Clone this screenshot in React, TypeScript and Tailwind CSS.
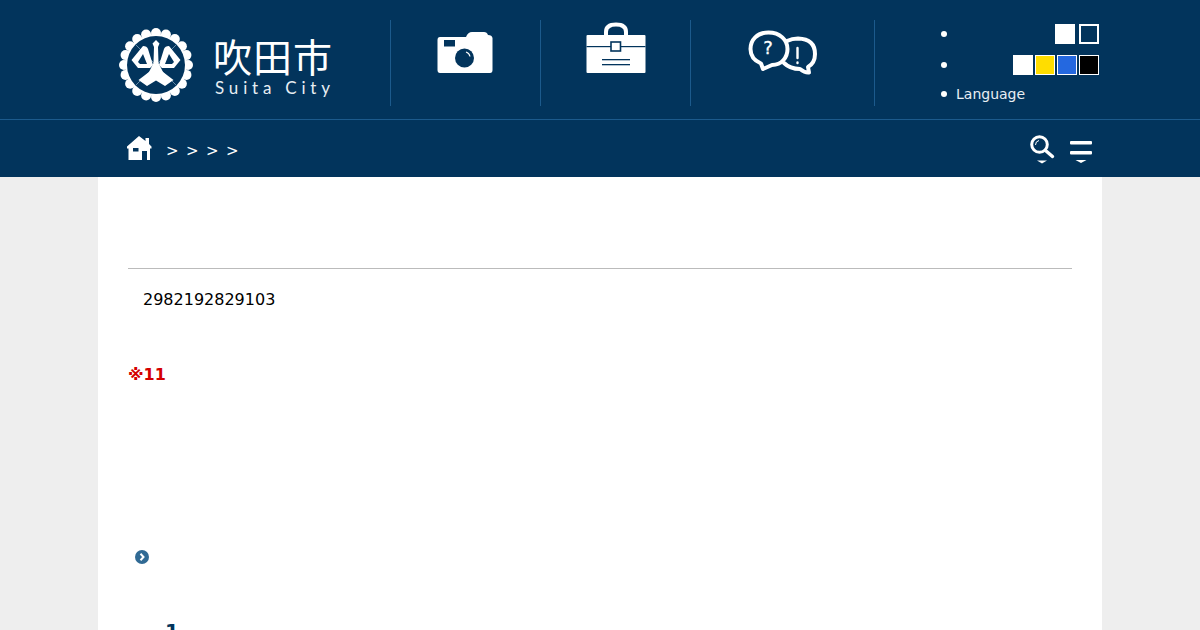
const FONT = "font-['DejaVu_Sans','Noto_Sans_CJK_JP',sans-serif]"

// 市章: scalloped ring + stylised bird
function Seal() {
  const scallops = Array.from({ length: 20 }).map((_, i) => {
    const a = (i / 20) * Math.PI * 2
    return { x: 38 + Math.cos(a) * 32, y: 38 + Math.sin(a) * 32 }
  })
  return (
    <svg width="76" height="76" viewBox="0 0 76 76">
      <circle cx="38" cy="38" r="31" fill="#fff" />
      {scallops.map((s, i) => <circle key={i} cx={s.x} cy={s.y} r="5" fill="#fff" />)}
      <circle cx="38" cy="38" r="29" fill="#02345c" />
      <path d="M17.500 17.500 L58.500 58.500 M58.500 17.500 L17.500 58.500" stroke="#8fb0c8" strokeWidth="0.700" />
      {/* 胴と尾 */}
      <path fill="#fff" d="M38 13 L41.500 16.500 L40 20 L40.500 36 L45 45 L55.500 53 L47 59 L38 53.500 L29 59 L20.500 53 L31 45 L35.500 36 L36 20 L34.500 16.500 Z" />
      {/* 左右の翼 */}
      <path fill="#fff" fillRule="evenodd" d="M25 19 Q29 19 30 22 L35 38 L32 41 L20 41 L13.500 33 Z M25 27 L20 35 L22 37 L29 37 Z" />
      <path fill="#fff" fillRule="evenodd" d="M51 19 Q47 19 46 22 L41 38 L44 41 L56 41 L62.500 33 Z M51 27 L56 35 L54 37 L47 37 Z" />
    </svg>
  )
}

function CameraIcon() {
  return (
    <svg width="56" height="43" viewBox="0 0 56 43">
      <path fill="#fff" d="M3 6 H29 Q31 1 35 1 H47 Q50 1 51 4 Q55 4 55.500 7 V39 Q55.500 42 53 42 H3 Q0.500 42 0.500 39 V9 Q0.500 6 3 6 Z" />
      <rect x="7" y="9" width="11" height="6.500" fill="#02345c" />
      <circle cx="27.500" cy="27" r="9.500" fill="#02345c" />
      <path d="M29 21 A6 6 0 0 1 33 25.500" fill="none" stroke="#fff" strokeWidth="1.200" />
    </svg>
  )
}

function BagIcon() {
  return (
    <svg width="60" height="52" viewBox="0 0 60 52">
      <path d="M20 13 V10 Q20 2.500 30 2.500 Q40 2.500 40 10 V13" fill="none" stroke="#fff" strokeWidth="4" />
      <rect x="0.500" y="13" width="59" height="38" rx="1" fill="#fff" />
      <rect x="0.500" y="24" width="59" height="1.200" fill="#02345c" />
      <rect x="25" y="20" width="9.500" height="9" fill="#fff" stroke="#02345c" strokeWidth="1.600" />
      <rect x="16" y="37" width="28" height="1.300" fill="#02345c" />
      <rect x="16" y="42" width="28" height="1.300" fill="#02345c" />
    </svg>
  )
}

function TalkIcon() {
  return (
    <svg width="70" height="46" viewBox="0 0 70 46" fill="none" stroke="#fff" strokeWidth="4" strokeLinecap="round" strokeLinejoin="round">
      <path d="M39 11 Q44 8.500 50 8.500 Q67 9 67 24 Q67 33 60 37 L61 42.500 Q57 43 52 39 Q42 39 36 33" />
      <path d="M20.500 2.500 C9 2.500 2.500 10 2.500 19 C2.500 26 7 31 13 33.500 L15 39 L24 35 C34 35 39.500 27 39.500 19 C39.500 10 32 2.500 20.500 2.500 Z" fill="#02345c" />
      <text x="20" y="24" fontFamily="DejaVu Sans" fontSize="18" fill="#fff" stroke="#fff" strokeWidth="0.300" textAnchor="middle">?</text>
      <path d="M49.500 18 V28 M49.500 32.500 V33" strokeWidth="2.400" />
    </svg>
  )
}

function HomeIcon() {
  return (
    <svg width="25" height="24" viewBox="0 0 25 24">
      <path fill="#fff" d="M12 0 L18.500 5 V2 H22 V8 L24.500 10.500 V12.500 H23 V24 H1.500 V12.500 H0 V10.500 Z" />
      <rect x="6" y="12" width="5.500" height="3.500" fill="#02345c" />
      <rect x="15" y="15" width="5" height="9" fill="#02345c" />
    </svg>
  )
}

function SearchIcon() {
  return (
    <svg width="25" height="29" viewBox="0 0 25 29" fill="none">
      <circle cx="9.500" cy="9.500" r="7.800" stroke="#fff" strokeWidth="3" />
      <path d="M15.500 15.500 L22.500 21.500" stroke="#fff" strokeWidth="3.400" strokeLinecap="round" />
      <path d="M5.500 10 A4.500 4.500 0 0 1 9 5.500" stroke="#fff" strokeWidth="1" />
      <path d="M7 25.500 H17 L12 28.500 Z" fill="#fff" />
    </svg>
  )
}

function MenuIcon() {
  return (
    <svg width="22" height="23" viewBox="0 0 22 23" fill="#fff">
      <rect x="0" y="0" width="22" height="3.500" rx="1" />
      <rect x="0" y="10" width="22" height="3.500" rx="1" />
      <path d="M5.500 19 H16.500 L11 22 Z" />
    </svg>
  )
}

function Swatch({ className }: { className: string }) {
  return <span className={`block h-5 w-5 border border-white ${className}`} />
}

function Dot() {
  return <span className="block h-[6px] w-[6px] shrink-0 rounded-full bg-white" />
}

export default function App() {
  return (
    <div className={`h-[630px] overflow-hidden bg-[#eeeeee] ${FONT}`}>
      {/* ヘッダー */}
      <header className="h-[120px] border-b border-[#1c5a8c] bg-[#02345c]">
        <div className="mx-auto flex h-[119px] w-[1004px] items-start pt-5">
          <div className="-mt-5 flex h-[119px] w-[292px] items-start pl-[20px] pt-[27px]">
            <Seal />
            <div className="ml-[19px] text-white">
              <p className="mt-[5px] font-['Noto_Sans_CJK_JP',sans-serif] text-[39px] leading-[46px] font-normal tracking-[1px] text-white">吹田市</p>
              <p className="ml-[2px] font-['Lato',sans-serif] text-[17px] leading-[20px] tracking-[4.800px] whitespace-nowrap text-[#e8eef3]">Suita City</p>
            </div>
          </div>
          <a className="flex h-[86px] w-[150px] justify-center border-l border-[#1c5a8c] pr-[2px] pt-[11px]"><CameraIcon /></a>
          <a className="flex h-[86px] w-[150px] justify-center border-l border-[#1c5a8c] pt-[2px]"><BagIcon /></a>
          <a className="flex h-[86px] w-[184px] justify-center border-l border-[#1c5a8c] pt-[10px]"><TalkIcon /></a>
          <ul className="flex h-[86px] w-[228px] flex-col border-l border-[#1c5a8c] pl-[66px] pr-[3px] text-[14px] text-[#e8eef3]">
            <li className="flex h-[31px] items-start pt-[4px]">
              <span className="mt-[7px] block"><Dot /></span>
              <div className="ml-auto flex gap-1"><Swatch className="bg-white" /><Swatch className="border-2 bg-[#02345c]" /></div>
            </li>
            <li className="flex h-[29px] items-start pt-[4px]">
              <span className="mt-[7px] block"><Dot /></span>
              <div className="ml-auto flex gap-[2px]">
                <Swatch className="bg-white" />
                <Swatch className="bg-[#ffdd00]" />
                <Swatch className="bg-[#2468e0]" />
                <Swatch className="bg-black" />
              </div>
            </li>
            <li className="flex h-[20px] items-center gap-[9px] pt-[8px] leading-[20px]">
              <Dot />
              <span>Language</span>
            </li>
          </ul>
        </div>
      </header>

      {/* パンくず */}
      <nav className="h-[57px] bg-[#02345c]">
        <div className="mx-auto flex h-full w-[1004px] items-start pl-[29px] pr-[10px] pt-[16px]">
          <HomeIcon />
          <div className="ml-[14px] mt-[6px] flex gap-[7.430px] text-[15px] leading-[19px] text-white">
            <span>&gt;</span><span>&gt;</span><span>&gt;</span><span>&gt;</span>
          </div>
          <div className="ml-auto flex items-start gap-[15px]">
            <div className="-mt-[1px]"><SearchIcon /></div>
            <div className="pt-[5px]"><MenuIcon /></div>
          </div>
        </div>
      </nav>

      {/* 本文 */}
      <main className="mx-auto h-[453px] w-[1004px] overflow-hidden bg-white px-[30px] pt-[91px]">
        <hr className="border-t border-[#bbbbbb]" />
        <p className="mt-[21px] pl-[15px] text-[16px] leading-[19px] text-black">2982192829103</p>
        <p className="mt-[56px] text-[16px] leading-[19px] font-bold text-[#d40000]">※11</p>
        <div className="mt-[166px] pl-[7px]">
          <svg width="14" height="14" viewBox="0 0 14 14">
            <circle cx="7" cy="7" r="7" fill="#306a94" />
            <path d="M5.500 3.800 L8.500 7 L5.500 10.200" fill="none" stroke="#fff" strokeWidth="2" />
          </svg>
        </div>
        <p className="mt-[55px] pl-[37px] text-[20px] leading-[24px] font-bold text-[#02345c]">1</p>
      </main>
    </div>
  )
}
